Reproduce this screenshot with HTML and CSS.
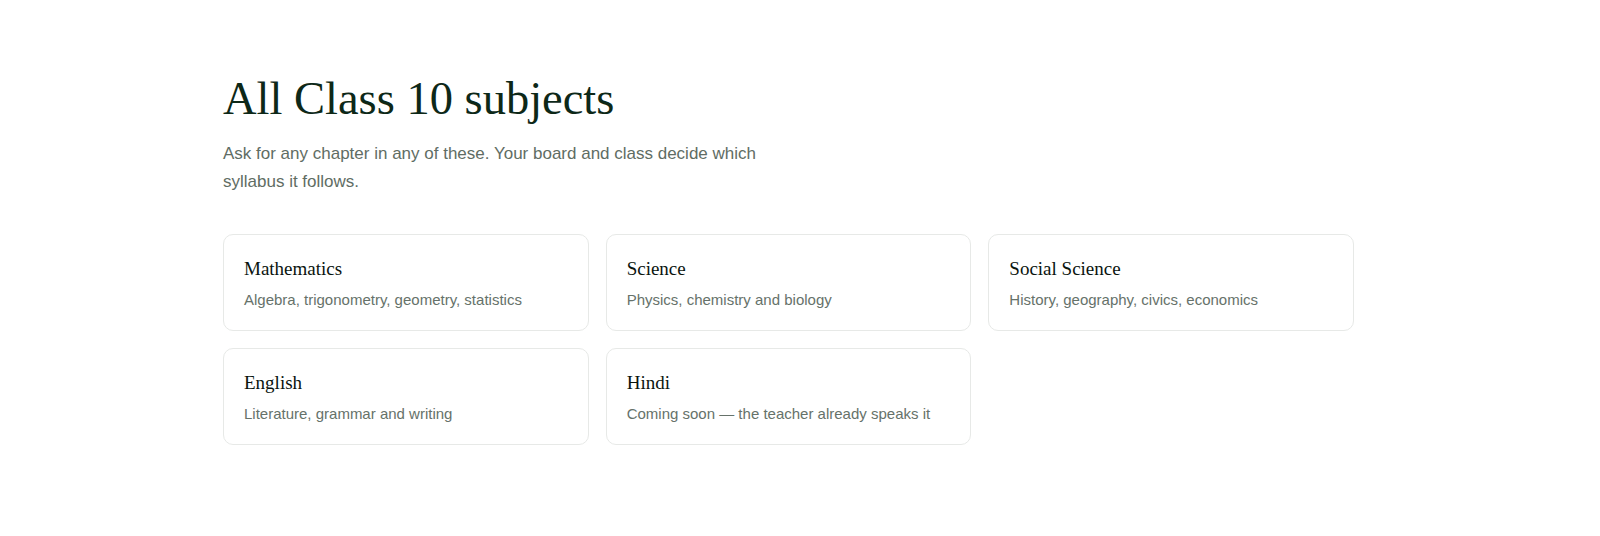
FILE: index.html
```html
<!DOCTYPE html>
<html lang="en">
<head>
  <meta charset="UTF-8" />
  <meta name="viewport" content="width=device-width, initial-scale=1.0"/>
  <title>Subjects</title>
  <link rel="stylesheet" href="styles.css">
</head>
<body>
  <section class="subjects">
    <h1>All Class 10 subjects</h1>
    <p class="lead">Ask for any chapter in any of these. Your board and class decide which syllabus it follows.</p>

    <div class="subject-grid">
      <div class="subject-card">
        <h3>Mathematics</h3>
        <p>Algebra, trigonometry, geometry, statistics</p>
      </div>
      <div class="subject-card">
        <h3>Science</h3>
        <p>Physics, chemistry and biology</p>
      </div>
      <div class="subject-card">
        <h3>Social Science</h3>
        <p>History, geography, civics, economics</p>
      </div>
      <div class="subject-card">
        <h3>English</h3>
        <p>Literature, grammar and writing</p>
      </div>
      <div class="subject-card">
        <h3>Hindi</h3>
        <p>Coming soon — the teacher already speaks it</p>
      </div>
    </div>
  </section>
</body>
</html>
```

FILE: styles.css
```css
body {
  margin: 0;
  background-color: #fff;
  color: #0d2818;
  font-family: "Liberation Sans", Arial, sans-serif;
}

.subjects {
  width: 1131px;
  padding: 71px 0 0 223px;
}

h1 {
  margin: 0;
  font-family: "Liberation Serif", "Times New Roman", serif;
  font-weight: 400;
  font-size: 46.5px;
  line-height: 56px;
  color: #0d2818;
}

.lead {
  margin: 13px 0 0;
  max-width: 560px;
  font-size: 17px;
  line-height: 28px;
  color: #5f6d64;
}

.subject-grid {
  display: grid;
  grid-template-columns: repeat(3, 1fr);
  gap: 17px;
  margin-top: 38px;
}

.subject-card {
  border: 1px solid #e7e9e7;
  border-radius: 10px;
  padding: 22px 20px 22px;
  height: 97px;
  box-sizing: border-box;
}

.subject-card h3 {
  margin: 0;
  font-family: "Liberation Serif", "Times New Roman", serif;
  font-weight: 400;
  font-size: 19px;
  line-height: 24px;
  color: #0a140e;
}

.subject-card p {
  margin: 9px 0 0;
  font-size: 15px;
  line-height: 20px;
  color: #66726a;
}
```
